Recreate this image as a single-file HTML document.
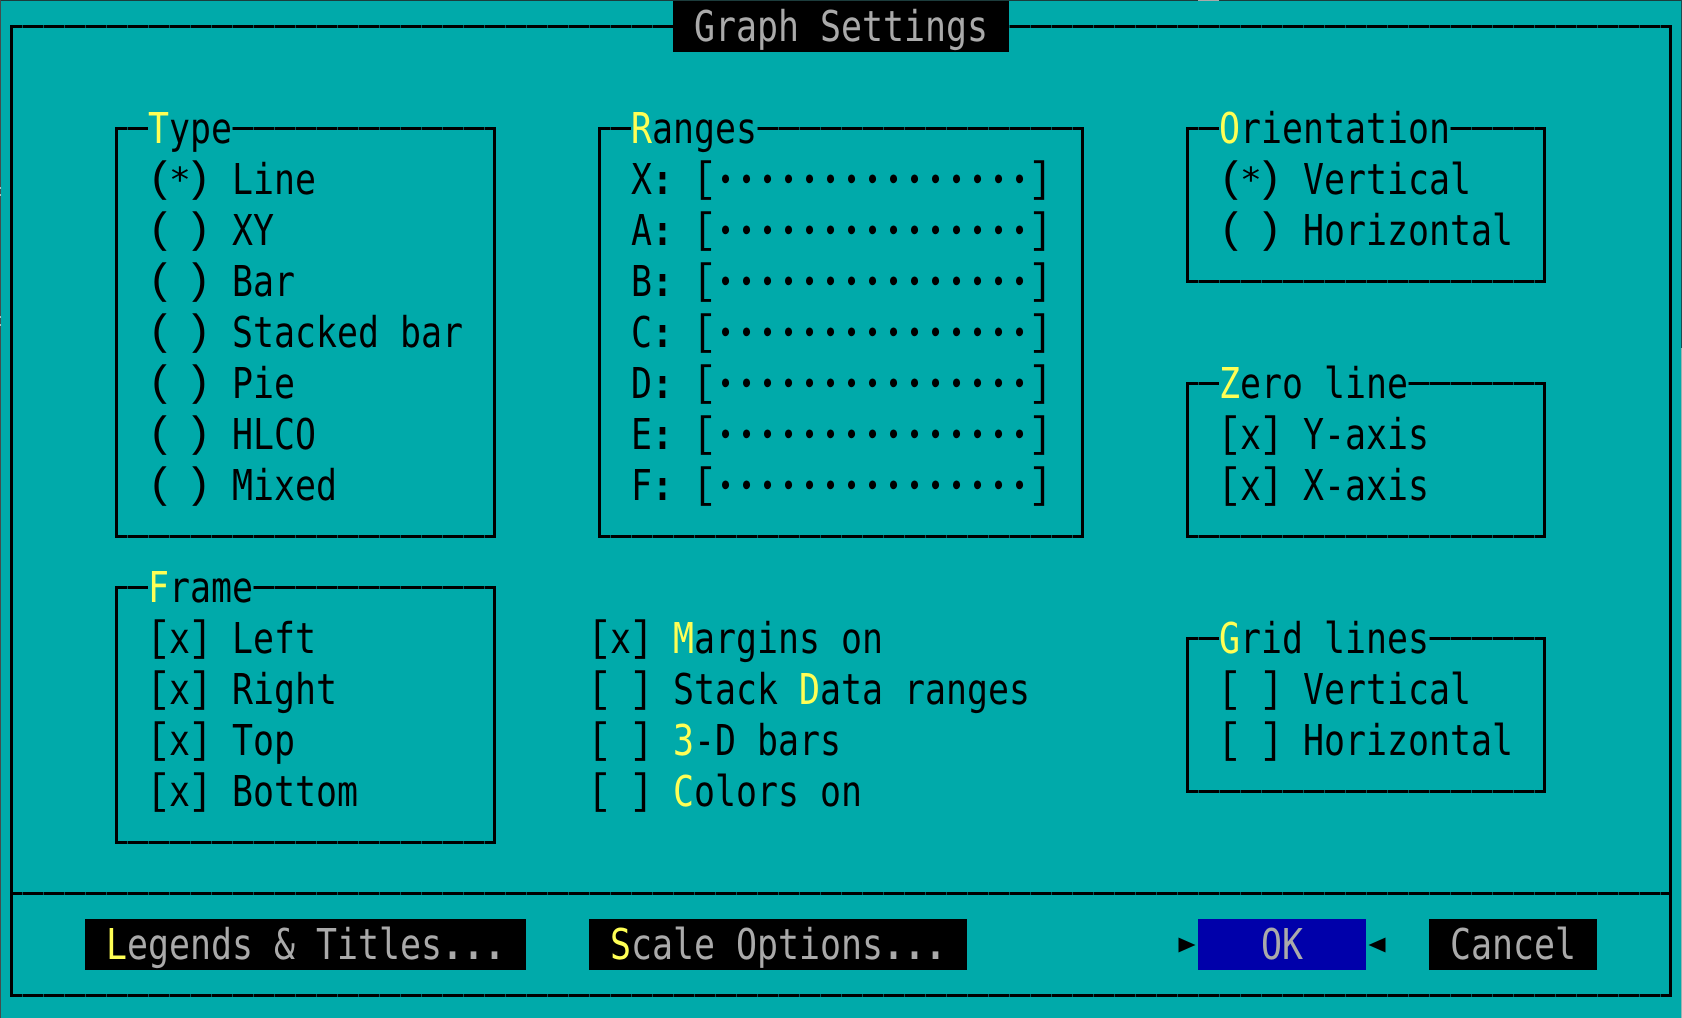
<!DOCTYPE html>
<html><head><meta charset="utf-8"><title>Graph Settings</title>
<style>
html,body{margin:0;padding:0;background:#00AAAA;width:1682px;height:1018px;overflow:hidden}
body{position:relative}
.t{position:absolute;left:calc(1px + 21px*var(--c));top:calc(2px + 51px*var(--r));white-space:pre;font-family:"DejaVu Sans Mono",monospace;font-size:42.5px;line-height:51px;color:#000;transform-origin:0 0;transform:scaleX(.8207);text-rendering:geometricPrecision}
.t b{font-weight:normal;color:#FFFF55}
.t i,.t u{display:inline-block;width:25.59px;text-align:center;font-style:normal;text-decoration:none;font-family:"Liberation Mono",monospace}
.t i{transform:translate(-2.4px,-3px) scale(1.3,1)}
.t i:first-child{transform:translate(2.4px,-3px) scale(1.3,1)}
.t u{transform:translateY(-3px) scale(1.1,1)}
.t s{text-decoration:none;font-weight:bold}
.t i + s{font-weight:normal;display:inline-block;transform:scale(1.05,.8)}
.t em{font-style:normal;font-size:30px;letter-spacing:7.53px;padding-left:3.77px;margin-right:-3.77px;position:relative;top:-4px}
.g{color:#AAAAAA}
.h,.v,.k,.u{position:absolute}
.h{height:3px;background-color:#000;background-image:linear-gradient(90deg,#045a5a 0,#045a5a 1px,#000 1px);background-size:21px 100%;background-position:1px 0;background-attachment:fixed}
.v{width:3px;background:#000}
.k{background:#000;height:51px;top:919px}
</style></head><body>

<!-- outer edge -->
<div class="u" style="left:0;top:0;width:1682px;height:1px;background:#1c3c3c"></div>
<div class="u" style="left:1198px;top:0;width:21px;height:1px;background:#AAAAAA"></div>
<div class="u" style="left:0;top:0;width:1px;height:1018px;background:#444c4c"></div>
<div class="u" style="left:0;top:187px;width:1px;height:2px;background:#bbb"></div>
<div class="u" style="left:0;top:194px;width:1px;height:2px;background:#bbb"></div>
<div class="u" style="left:0;top:316px;width:1px;height:2px;background:#bbb"></div>
<div class="u" style="left:0;top:324px;width:1px;height:2px;background:#bbb"></div>
<div class="u" style="left:1681px;top:0;width:1px;height:348px;background:#1c4c50"></div>
<div class="u" style="left:1681px;top:348px;width:1px;height:670px;background:#9fb0b0"></div>

<!-- outer frame -->
<div class="h" style="left:10px;top:25px;width:663px"></div>
<div class="h" style="left:1009px;top:25px;width:663px"></div>
<div class="h" style="left:10px;top:892px;width:1662px"></div>
<div class="h" style="left:10px;top:994px;width:1662px"></div>
<div class="v" style="left:10px;top:25px;height:972px"></div>
<div class="v" style="left:1669px;top:25px;height:972px"></div>

<!-- title -->
<div class="u" style="left:673px;top:1px;width:336px;height:51px;background:#000"></div>
<div class="t g" style="--c:33;--r:0">Graph Settings</div>

<!-- Type box -->
<div class="h" style="left:115px;top:127px;width:33px"></div>
<div class="h" style="left:232px;top:127px;width:264px"></div>
<div class="h" style="left:115px;top:535px;width:381px"></div>
<div class="v" style="left:115px;top:127px;height:411px"></div>
<div class="v" style="left:493px;top:127px;height:411px"></div>
<div class="t" style="--c:7;--r:2"><b>T</b>ype</div>
<div class="t" style="--c:7;--r:3"><i>(</i><s>*</s><i>)</i> Line</div>
<div class="t" style="--c:7;--r:4"><i>(</i> <i>)</i> XY</div>
<div class="t" style="--c:7;--r:5"><i>(</i> <i>)</i> Bar</div>
<div class="t" style="--c:7;--r:6"><i>(</i> <i>)</i> Stacked bar</div>
<div class="t" style="--c:7;--r:7"><i>(</i> <i>)</i> Pie</div>
<div class="t" style="--c:7;--r:8"><i>(</i> <i>)</i> HLCO</div>
<div class="t" style="--c:7;--r:9"><i>(</i> <i>)</i> Mixed</div>

<!-- Frame box -->
<div class="h" style="left:115px;top:586px;width:33px"></div>
<div class="h" style="left:253px;top:586px;width:243px"></div>
<div class="h" style="left:115px;top:841px;width:381px"></div>
<div class="v" style="left:115px;top:586px;height:258px"></div>
<div class="v" style="left:493px;top:586px;height:258px"></div>
<div class="t" style="--c:7;--r:11"><b>F</b>rame</div>
<div class="t" style="--c:7;--r:12"><u>[</u>x<u>]</u> Left</div>
<div class="t" style="--c:7;--r:13"><u>[</u>x<u>]</u> Right</div>
<div class="t" style="--c:7;--r:14"><u>[</u>x<u>]</u> Top</div>
<div class="t" style="--c:7;--r:15"><u>[</u>x<u>]</u> Bottom</div>

<!-- Ranges box -->
<div class="h" style="left:598px;top:127px;width:33px"></div>
<div class="h" style="left:757px;top:127px;width:327px"></div>
<div class="h" style="left:598px;top:535px;width:486px"></div>
<div class="v" style="left:598px;top:127px;height:411px"></div>
<div class="v" style="left:1081px;top:127px;height:411px"></div>
<div class="t" style="--c:30;--r:2"><b>R</b>anges</div>
<div class="t" style="--c:30;--r:3">X<s>:</s> <u>[</u><em>•••••••••••••••</em><u>]</u></div>
<div class="t" style="--c:30;--r:4">A<s>:</s> <u>[</u><em>•••••••••••••••</em><u>]</u></div>
<div class="t" style="--c:30;--r:5">B<s>:</s> <u>[</u><em>•••••••••••••••</em><u>]</u></div>
<div class="t" style="--c:30;--r:6">C<s>:</s> <u>[</u><em>•••••••••••••••</em><u>]</u></div>
<div class="t" style="--c:30;--r:7">D<s>:</s> <u>[</u><em>•••••••••••••••</em><u>]</u></div>
<div class="t" style="--c:30;--r:8">E<s>:</s> <u>[</u><em>•••••••••••••••</em><u>]</u></div>
<div class="t" style="--c:30;--r:9">F<s>:</s> <u>[</u><em>•••••••••••••••</em><u>]</u></div>

<!-- Middle checks -->
<div class="t" style="--c:28;--r:12"><u>[</u>x<u>]</u> <b>M</b>argins on</div>
<div class="t" style="--c:28;--r:13"><u>[</u> <u>]</u> Stack <b>D</b>ata ranges</div>
<div class="t" style="--c:28;--r:14"><u>[</u> <u>]</u> <b>3</b>-D bars</div>
<div class="t" style="--c:28;--r:15"><u>[</u> <u>]</u> <b>C</b>olors on</div>

<!-- Orientation -->
<div class="h" style="left:1186px;top:127px;width:33px"></div>
<div class="h" style="left:1450px;top:127px;width:96px"></div>
<div class="h" style="left:1186px;top:280px;width:360px"></div>
<div class="v" style="left:1186px;top:127px;height:156px"></div>
<div class="v" style="left:1543px;top:127px;height:156px"></div>
<div class="t" style="--c:58;--r:2"><b>O</b>rientation</div>
<div class="t" style="--c:58;--r:3"><i>(</i><s>*</s><i>)</i> Vertical</div>
<div class="t" style="--c:58;--r:4"><i>(</i> <i>)</i> Horizontal</div>

<!-- Zero line -->
<div class="h" style="left:1186px;top:382px;width:33px"></div>
<div class="h" style="left:1408px;top:382px;width:138px"></div>
<div class="h" style="left:1186px;top:535px;width:360px"></div>
<div class="v" style="left:1186px;top:382px;height:156px"></div>
<div class="v" style="left:1543px;top:382px;height:156px"></div>
<div class="t" style="--c:58;--r:7"><b>Z</b>ero line</div>
<div class="t" style="--c:58;--r:8"><u>[</u>x<u>]</u> Y-axis</div>
<div class="t" style="--c:58;--r:9"><u>[</u>x<u>]</u> X-axis</div>

<!-- Grid lines -->
<div class="h" style="left:1186px;top:637px;width:33px"></div>
<div class="h" style="left:1429px;top:637px;width:117px"></div>
<div class="h" style="left:1186px;top:790px;width:360px"></div>
<div class="v" style="left:1186px;top:637px;height:156px"></div>
<div class="v" style="left:1543px;top:637px;height:156px"></div>
<div class="t" style="--c:58;--r:12"><b>G</b>rid lines</div>
<div class="t" style="--c:58;--r:13"><u>[</u> <u>]</u> Vertical</div>
<div class="t" style="--c:58;--r:14"><u>[</u> <u>]</u> Horizontal</div>

<!-- Buttons -->
<div class="k" style="left:85px;width:441px"></div>
<div class="t g" style="--c:5;--r:18"><b>L</b>egends &amp; Titles<s>...</s></div>
<div class="k" style="left:589px;width:378px"></div>
<div class="t g" style="--c:29;--r:18"><b>S</b>cale Options<s>...</s></div>
<div class="k" style="left:1198px;width:168px;background:#0000AA"></div>
<div class="t g" style="--c:60;--r:18">OK</div>
<div class="k" style="left:1429px;width:168px"></div>
<div class="t g" style="--c:69;--r:18">Cancel</div>
<svg class="u" style="left:1177px;top:936px" width="20" height="18"><polygon points="1.5,1.5 18.5,9 1.5,16.5" fill="#000"/></svg>
<svg class="u" style="left:1367px;top:936px" width="20" height="18"><polygon points="18.5,1.5 1.5,9 18.5,16.5" fill="#000"/></svg>
</body></html>
